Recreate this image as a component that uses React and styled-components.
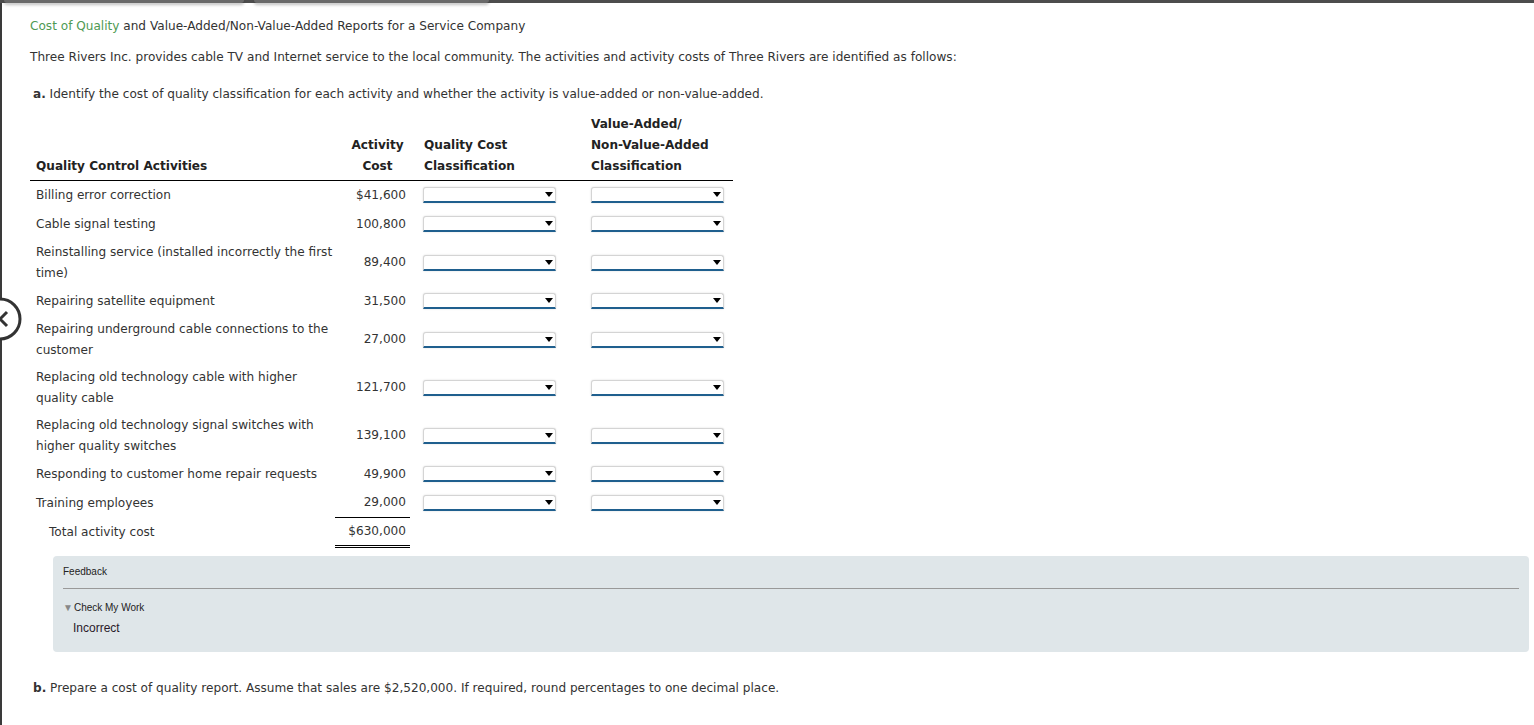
import React from 'react';
import styled, { createGlobalStyle } from 'styled-components';

const rows = [
  { name: 'Billing error correction', cost: '$41,600' },
  { name: 'Cable signal testing', cost: '100,800' },
  { name: ['Reinstalling service (installed incorrectly the first', 'time)'], cost: '89,400' },
  { name: 'Repairing satellite equipment', cost: '31,500' },
  { name: ['Repairing underground cable connections to the', 'customer'], cost: '27,000' },
  { name: ['Replacing old technology cable with higher', 'quality cable'], cost: '121,700' },
  { name: ['Replacing old technology signal switches with', 'higher quality switches'], cost: '139,100' },
  { name: 'Responding to customer home repair requests', cost: '49,900' },
  { name: 'Training employees', cost: '29,000' },
];

const Dropdown = () => (
  <SelectWrap>
    <Select defaultValue="">
      <option value=""></option>
    </Select>
    <Caret viewBox="0 0 8 5">
      <path d="M0 0 H8 L4 5 Z" fill="#000" />
    </Caret>
  </SelectWrap>
);

const App = () => {
  return (
    <>
      <GlobalStyle />
      <TopBar>
        <Tab $w={240} />
        <Tab $w={235} />
      </TopBar>
      <Page>
        <NavCircle viewBox="0 0 46 46">
          <circle cx="21" cy="23" r="20" fill="#fff" stroke="#333" strokeWidth="3" />
          <path d="M28 16 L21 23 L28 30" fill="none" stroke="#333" strokeWidth="3" />
        </NavCircle>
        <Title>
          <Green>Cost of Quality</Green> and Value-Added/Non-Value-Added Reports for a Service Company
        </Title>
        <Para>
          Three Rivers Inc. provides cable TV and Internet service to the local community. The activities and activity costs of Three Rivers are identified as follows:
        </Para>
        <Question>
          <b>a.</b> Identify the cost of quality classification for each activity and whether the activity is value-added or non-value-added.
        </Question>

        <Table>
          <colgroup>
            <col style={{ width: 305 }} />
            <col style={{ width: 75 }} />
            <col style={{ width: 175 }} />
            <col style={{ width: 148 }} />
          </colgroup>
          <thead>
            <tr>
              <Th>Quality Control Activities</Th>
              <Th $align="center" $pl={14} $pr={4}>Activity<br />Cost</Th>
              <Th $pl={14}>Quality Cost<br />Classification</Th>
              <Th>Value-Added/<br />Non-Value-Added<br />Classification</Th>
            </tr>
          </thead>
          <tbody>
            {rows.map((r, i) => (
              <Row key={i}>
                <NameTd>
                  {Array.isArray(r.name) ? (
                    <>{r.name[0]}<br />{r.name[1]}</>
                  ) : r.name}
                </NameTd>
                <Td $align="right" $pr={4}>{r.cost}</Td>
                <Td $pl={13}><Dropdown /></Td>
                <Td><Dropdown /></Td>
              </Row>
            ))}
            <Row>
              <NameTd $pl={19}>Total activity cost</NameTd>
              <TotalTd>$630,000</TotalTd>
              <Td />
              <Td />
            </Row>
          </tbody>
        </Table>

        <Feedback>
          <FeedbackHead>Feedback</FeedbackHead>
          <CheckLine><Tri>▼</Tri>Check My Work</CheckLine>
          <Result>Incorrect</Result>
        </Feedback>

        <Question $top={26}>
          <b>b.</b> Prepare a cost of quality report. Assume that sales are $2,520,000. If required, round percentages to one decimal place.
        </Question>
      </Page>
    </>
  );
};

export default App;

const GlobalStyle = createGlobalStyle`
  body {
    margin: 0;
    background: #fff;
    font-family: "DejaVu Sans", Verdana, sans-serif;
    font-size: 12.1px;
    color: #333;
    overflow: hidden;
  }
`;

const TopBar = styled.div`
  height: 3px;
  background: #4d4d4d;
  display: flex;
  gap: 10px;
  padding-left: 4px;
`;

const Tab = styled.div`
  width: ${p => p.$w}px;
  height: 3px;
  background: #6a6a6a;
  border-radius: 0 0 4px 4px;
  box-shadow: 0 2px 3px rgba(0, 0, 0, 0.25);
`;

const Page = styled.div`
  position: relative;
  border-left: 2px solid #3a3a3a;
  min-height: 722px;
  box-sizing: border-box;
  padding: 13px 0 0 28px;
`;

const NavCircle = styled.svg`
  position: absolute;
  left: -23px;
  top: 293px;
  width: 46px;
  height: 46px;
`;

const Title = styled.div`
  line-height: 20px;
`;

const Green = styled.span`
  color: #4f9a53;
`;

const Para = styled.div`
  line-height: 20px;
  margin-top: 11px;
`;

const Question = styled.div`
  line-height: 20px;
  margin-top: ${p => p.$top || 17}px;
  padding-left: 3px;
  b {
    font-weight: bold;
  }
`;

const Table = styled.table`
  margin-top: 10px;
  border-collapse: collapse;
  table-layout: fixed;
  width: 703px;
`;

const Th = styled.th`
  font-weight: bold;
  color: #222;
  text-align: ${p => p.$align || 'left'};
  vertical-align: bottom;
  line-height: 21px;
  padding: 0 ${p => (p.$pr ?? 6)}px 3px ${p => (p.$pl ?? 6)}px;
  border-bottom: 1px solid #000;
`;

const Row = styled.tr`
  height: 29px;
`;

const Td = styled.td`
  text-align: ${p => p.$align || 'left'};
  vertical-align: middle;
  line-height: 21px;
  padding: 3px ${p => (p.$pr ?? 6)}px 3px ${p => (p.$pl ?? 6)}px;
  color: #333;
`;

const NameTd = styled(Td)`
  white-space: nowrap;
`;

const TotalTd = styled.td`
  text-align: right;
  line-height: 21px;
  padding: 3px 4px 3px 6px;
  border-top: 1px solid #000;
  border-bottom: 3px double #000;
`;

const SelectWrap = styled.div`
  position: relative;
  width: 133px;
  height: 16px;
`;

const Select = styled.select`
  appearance: none;
  display: block;
  width: 100%;
  height: 16px;
  box-sizing: border-box;
  background: #fff;
  border: 1px solid #d4d4d4;
  border-bottom: 2px solid #1f5f8e;
  border-radius: 3px 3px 0 0;
  box-shadow: 0 0 2px rgba(0, 0, 0, 0.15);
  margin: 0;
  padding: 0;
`;

const Caret = styled.svg`
  position: absolute;
  right: 3px;
  top: 5px;
  width: 8px;
  height: 5px;
  pointer-events: none;
`;

const Feedback = styled.div`
  margin: 8px 5px 0 23px;
  background: #dfe6e9;
  border-radius: 4px;
  padding: 10px 10px 16px 10px;
  font-family: "Liberation Sans", Arial, sans-serif;
`;

const FeedbackHead = styled.div`
  font-size: 10px;
  line-height: 12px;
  color: #222;
  padding-bottom: 10px;
  border-bottom: 1px solid #999;
`;

const CheckLine = styled.div`
  font-size: 10px;
  line-height: 12px;
  color: #222;
  margin-top: 13px;
`;

const Tri = styled.span`
  color: #888;
  font-size: 10px;
  margin-right: 1px;
`;

const Result = styled.div`
  font-size: 12px;
  line-height: 16px;
  color: #2a1a2a;
  margin-top: 6px;
  padding-left: 10px;
`;
